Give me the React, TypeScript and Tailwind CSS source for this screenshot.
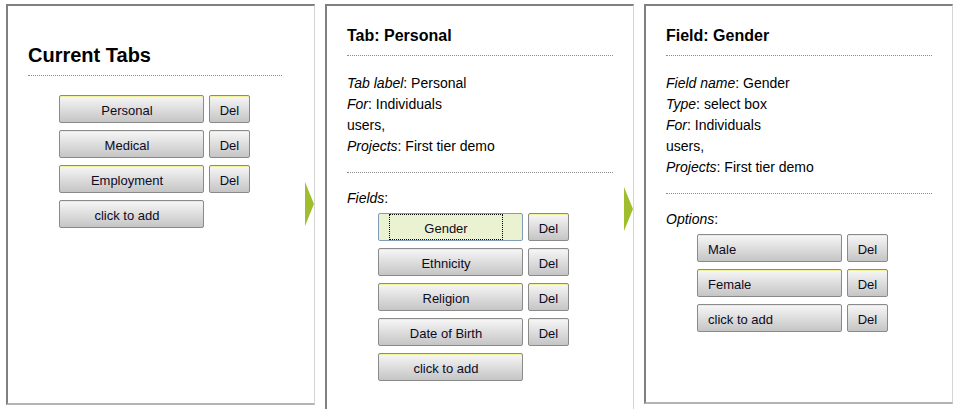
const font = { fontFamily: '"Liberation Sans", Arial, sans-serif' };

type RowProps = { label: string; del?: boolean; focused?: boolean; left?: boolean };

function Row({ label, del = true, focused = false, left = false }: RowProps) {
  const base =
    'relative h-[28px] rounded-[2px] border pt-[2px] text-[13px] leading-none text-[#0d0a24]';
  const plain =
    'border-[#8a8a8a] bg-gradient-to-b from-[#f7f7f7] to-[#c5c5c5] shadow-[inset_0_1px_0_#f2f29a]';
  return (
    <div className="flex gap-[5px]">
      <button
        className={`${base} w-[145px] ${left ? 'pl-[10px] text-left' : 'pr-[9px] text-center'} ${
          focused ? 'border-[#7f9db9] bg-[#ebf2d2]' : plain
        }`}
      >
        {focused && (
          <span className="absolute inset-y-0 left-[10px] right-[19px] border border-dotted border-black" />
        )}
        {label}
      </button>
      {del && <button className={`${base} w-[41px] text-center ${plain}`}>Del</button>}
    </div>
  );
}

function Arrow({ top }: { top: string }) {
  return (
    <svg className={`absolute right-0 ${top}`} width="9" height="44" viewBox="0 0 9 44">
      <polygon points="0,0 9,22 0,44" fill="#9fbd2d" />
    </svg>
  );
}

function Panel({ children, className = '' }: { children: React.ReactNode; className?: string }) {
  return (
    <div
      className={`relative w-[309px] shrink-0 border-t-2 border-l-2 border-r border-b-2 border-t-[#808080] border-l-[#808080] border-r-[#d4d4d4] border-b-[#b4b4b4] bg-white pl-[20px] ${className}`}
    >
      {children}
    </div>
  );
}

function Info({ label, value }: { label: string; value: string }) {
  return (
    <div>
      <i>{label}</i>: {value}
    </div>
  );
}

export default function App() {
  return (
    <div className="h-[409px] overflow-hidden bg-white text-black" style={font}>
      <div className="flex items-start gap-[10px] pl-[6px] pt-[4px]">
        <Panel className="h-[401px] pr-[32px] pt-[38px]">
          <h1 className="border-b border-dotted border-[#8a8a8a] pb-[8px] text-[20px] font-bold leading-[23px]">
            Current Tabs
          </h1>
          <div className="ml-[31px] mt-[19px] flex flex-col gap-[7px]">
            <Row label="Personal" />
            <Row label="Medical" />
            <Row label="Employment" />
            <Row label="click to add" del={false} />
          </div>
          <Arrow top="top-[176px]" />
        </Panel>

        <Panel className="h-[430px] pr-[20px] pt-[21px]">
          <h2 className="border-b border-dotted border-[#8a8a8a] pb-[10px] text-[16px] font-bold leading-[18px]">
            Tab: Personal
          </h2>
          <div className="mt-[17px] border-b border-dotted border-[#8a8a8a] pb-[15px] text-[14px] leading-[21px]">
            <Info label="Tab label" value="Personal" />
            <Info label="For" value="Individuals" />
            <div>users,</div>
            <Info label="Projects" value="First tier demo" />
          </div>
          <div className="mt-[15px] text-[14px] leading-[21px]">
            <i>Fields</i>:
          </div>
          <div className="ml-[31px] mt-[4px] flex flex-col gap-[7px]">
            <Row label="Gender" focused />
            <Row label="Ethnicity" />
            <Row label="Religion" />
            <Row label="Date of Birth" />
            <Row label="click to add" del={false} />
          </div>
          <Arrow top="top-[181px]" />
        </Panel>

        <Panel className="h-[400px] pr-[20px] pt-[21px]">
          <h2 className="border-b border-dotted border-[#8a8a8a] pb-[10px] text-[16px] font-bold leading-[18px]">
            Field: Gender
          </h2>
          <div className="mt-[17px] border-b border-dotted border-[#8a8a8a] pb-[15px] text-[14px] leading-[21px]">
            <Info label="Field name" value="Gender" />
            <Info label="Type" value="select box" />
            <Info label="For" value="Individuals" />
            <div>users,</div>
            <Info label="Projects" value="First tier demo" />
          </div>
          <div className="mt-[15px] text-[14px] leading-[21px]">
            <i>Options</i>:
          </div>
          <div className="ml-[31px] mt-[4px] flex flex-col gap-[7px]">
            <Row label="Male" left />
            <Row label="Female" left />
            <Row label="click to add" left />
          </div>
        </Panel>
      </div>
    </div>
  );
}
